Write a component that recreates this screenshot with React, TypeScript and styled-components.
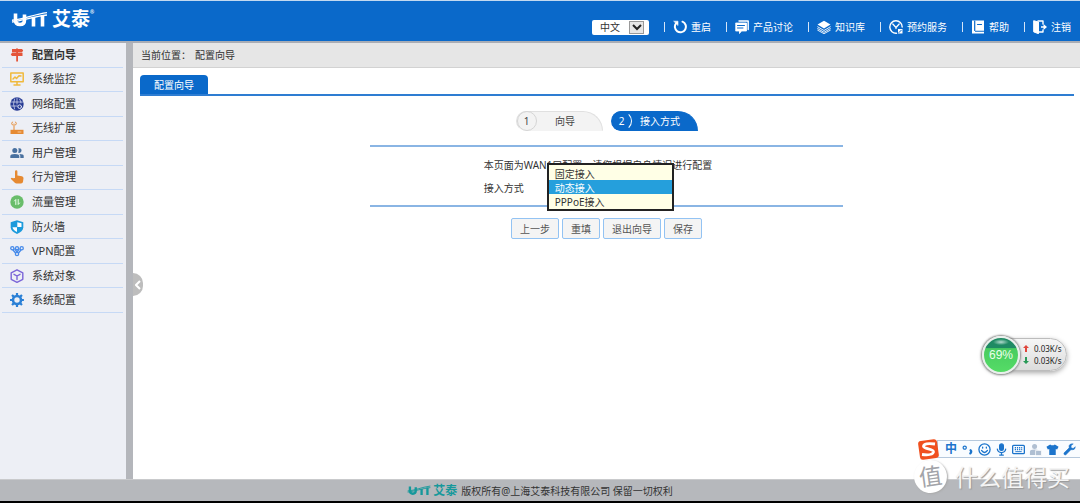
import React from "react";
import styled, { createGlobalStyle } from "styled-components";

const blue = "#0a69ca";

const GlobalStyle = createGlobalStyle`
  * { box-sizing: border-box; }
  body {
    margin: 0;
    background: #fff;
    color: #333;
    font: 10px/14px "Noto Sans", "Noto Sans CJK SC", sans-serif;
  }
  button, select { font: inherit; color: inherit; }
  ul, p { margin: 0; padding: 0; list-style: none; }
  a { color: inherit; text-decoration: none; }
  svg { display: block; flex: none; }
`;

const Page = styled.div`
  position: relative;
  display: flex;
  flex-direction: column;
  min-height: 100vh;
`;

const Header = styled.header`
  display: flex;
  justify-content: space-between;
  height: 43px;
  padding: 0 9px 0 11px;
  background: ${blue};
  border-top: 1px solid #c3d9f0;
  border-bottom: 2px solid #a9adb5;
  color: #fff;
`;

const Brand = styled.a`
  display: flex;
  align-items: center;
  gap: 4px;
  height: 36px;
  font-size: 19px;
  line-height: 20px;
  font-weight: 700;
`;

const Reg = styled.small`
  align-self: flex-start;
  margin-left: -4px;
  padding-top: 8px;
  font-size: 5px;
  line-height: 6px;
`;

const Nav = styled.nav`
  display: flex;
  align-items: center;
  gap: 15px;
  padding-top: 12px;
`;

const LangBox = styled.div`
  position: relative;
  color: #333;
`;

const LangSelect = styled.select`
  display: block;
  width: 57px;
  height: 15px;
  padding: 0 8px;
  border: 0;
  border-radius: 2px;
  background: #fff;
  appearance: none;
`;

const LangArrow = styled.span`
  position: absolute;
  top: 1px;
  right: 5px;
  display: grid;
  place-items: center;
  width: 15px;
  height: 13px;
  border: 1px solid #999;
  background: #e6e6e6;
  pointer-events: none;
`;

const NavLink = styled.a`
  display: flex;
  align-items: center;
  gap: 4px;
  &::before {
    content: "";
    width: 1px;
    height: 10px;
    margin-right: 4px;
    background: #d5e5f7;
  }
`;

const Body = styled.div`
  display: flex;
  flex: 1;
`;

const Sidebar = styled.nav`
  flex: none;
  width: 133px;
  background: #edeff5;
  border-right: 7px solid #b4b6bb;
`;

const Menu = styled.ul`
  display: grid;
  grid-template-rows: repeat(11, 1fr);
  height: 270px;
  padding: 0 3px 0 2px;
`;

const MenuItem = styled.li`
  display: flex;
  border-bottom: 1px solid #c6d9f5;
`;

const MenuLink = styled.a<{ $active?: boolean }>`
  display: flex;
  flex: 1;
  align-items: center;
  gap: 8px;
  padding-left: 8px;
  font-size: 11px;
  font-weight: ${(p) => (p.$active ? 700 : 400)};
`;

const Main = styled.main`
  position: relative;
  flex: 1;
  min-width: 0;
`;

const Collapse = styled.button`
  position: absolute;
  top: 230px;
  left: 0;
  display: grid;
  place-items: center;
  width: 10px;
  height: 23px;
  padding: 0;
  border: 0;
  border-radius: 0 12px 12px 0;
  background: #bdbdbd;
`;

const Crumbs = styled.div`
  display: flex;
  align-items: center;
  gap: 4px;
  height: 25px;
  padding-left: 8px;
  background: #e6e6e6;
  border-bottom: 1px solid #d2d2d2;
`;

const Tabs = styled.div`
  display: flex;
  margin: 7px 6px 0 7px;
  border-bottom: 2px solid #2e7dd2;
`;

const Tab = styled.button`
  height: 19px;
  padding: 0 14px;
  border: 0;
  border-radius: 4px 4px 0 0;
  background: ${blue};
  color: #fff;
`;

const Steps = styled.div`
  display: flex;
  justify-content: center;
  gap: 8px;
  padding-top: 15px;
`;

const Step = styled.div<{ $active?: boolean }>`
  display: flex;
  align-items: center;
  width: 87px;
  height: 20px;
  border: 1px solid ${(p) => (p.$active ? blue : "#e0e0e0")};
  border-bottom-color: ${(p) => (p.$active ? blue : "#f3f3f3")};
  border-radius: 10px 20px 0 10px;
  background: ${(p) => (p.$active ? blue : "#f3f3f3")};
  color: ${(p) => (p.$active ? "#fff" : "#444")};
`;

const StepNumber = styled.span<{ $active?: boolean }>`
  flex: none;
  width: 20px;
  height: 20px;
  border: 1px solid ${(p) => (p.$active ? blue : "#d5d5d5")};
  border-right-color: ${(p) => (p.$active ? "#fff" : "#d5d5d5")};
  border-radius: 10px;
  line-height: 18px;
  text-align: center;
`;

const StepLabel = styled.span`
  flex: 1;
  padding-right: 8px;
  text-align: center;
`;

const Panel = styled.section`
  position: relative;
  display: flex;
  flex-direction: column;
  align-items: flex-start;
  gap: 9px;
  width: 50%;
  height: 62px;
  margin: 14px auto 0;
  padding: 11px 0 0 114px;
  border: solid #8ab5e4;
  border-width: 2px 0;
  white-space: nowrap;
`;

const AccessList = styled.select`
  position: absolute;
  top: 16px;
  left: 177px;
  width: 127px;
  height: 48px;
  padding: 1px 0;
  border: 2px solid #222;
  border-radius: 0;
  background: #ffffe6;
  overflow: hidden;
  outline: 0;
`;

const AccessOption = styled.option`
  min-height: 14px;
  height: 14px;
  padding: 0 6px;
  line-height: 14px;
  &:checked {
    background: linear-gradient(#259fdc, #259fdc);
    -webkit-text-fill-color: #fff;
  }
`;

const Actions = styled.div`
  display: flex;
  justify-content: center;
  gap: 3px;
  padding-top: 11px;
`;

const ActionButton = styled.button`
  height: 21px;
  padding: 0 8px;
  border: 1px solid #93c3f3;
  border-radius: 2px;
  background: #f4f4f4;
  color: #555;
`;

const Footer = styled.footer`
  display: flex;
  align-items: center;
  justify-content: center;
  gap: 4px;
  height: 24px;
  background: #b6b8bc;
  border-top: 1px solid #c9cacc;
  border-bottom: 2px solid #000;
`;

const FooterBrand = styled.span`
  display: flex;
  align-items: center;
  gap: 2px;
  color: #16989b;
  font-size: 12px;
  font-weight: 700;
`;

const Traffic = styled.aside`
  position: absolute;
  top: 338px;
  right: 13px;
  display: flex;
  align-items: center;
  width: 84px;
  height: 33px;
  border: 1px solid #bcbcbc;
  border-radius: 17px;
  background: linear-gradient(#f6f6f6, #dcdcdc);
  box-shadow: 0 2px 5px #aaa;
`;

const Ball = styled.div`
  flex: none;
  display: grid;
  place-items: center;
  width: 38px;
  height: 38px;
  margin: 0 3px 0 -2px;
  border: 2px solid #e9f0ec;
  border-radius: 50%;
  background: radial-gradient(ellipse 8px 3px at 50% 12%, #b6dccf, transparent),
    linear-gradient(#1f8a63 0 30%, #48cc60 31%, #55dc66);
  box-shadow: 0 0 2px 1px #888;
  color: #e9ffe9;
  font: 12px/14px "Liberation Sans", sans-serif;
`;

const Rates = styled.ul`
  color: #222;
  font: 8px/12px "Noto Sans", sans-serif;
`;

const Rate = styled.li`
  display: flex;
  align-items: center;
  gap: 5px;
`;

const InputBar = styled.div`
  position: absolute;
  top: 440px;
  right: 0;
  display: flex;
  align-items: center;
  gap: 4px;
  height: 18px;
  padding: 0 4px 0 6px;
  border: 1px solid #b5c8dc;
  border-right: 0;
  background: #f9fcff;
  color: #1b74cc;
  font-size: 12px;
  font-weight: 700;
`;

const SogouMark = styled.span`
  margin: 0 1px 0 -27px;
`;

const Watermark = styled.div`
  position: absolute;
  top: 460px;
  right: 10px;
  display: flex;
  align-items: center;
  gap: 8px;
  color: #f4f4f4;
  font-size: 23px;
  line-height: 32px;
  text-shadow: 1px 1px 1px #999;
`;

const Seal = styled.span`
  width: 33px;
  height: 33px;
  border-radius: 50%;
  background: #fff;
  box-shadow: 1px 1px 2px #aaa;
  color: #a2a4a9;
  text-align: center;
  text-shadow: none;
  transform: rotate(-8deg);
`;

function Mark({ width }: { width: number }) {
  return (
    <svg width={width} viewBox="0 0 37 16" fill="none" stroke="currentColor">
      <path d="M4.500 2.500V9q0 4.500 4.500 4.500T13.500 9V3.500" strokeWidth="3.600" />
      <path d="M22.500 6v9.500M31.500 4v11.500" strokeWidth="3.600" />
      <path d="M1 9.200C12 8.500 22 3.500 36 1.600M1 11C12 9.500 23 5.500 36 4" strokeWidth="1.400" />
    </svg>
  );
}

const Icon = ({ children, size = 14 }: { children: React.ReactNode; size?: number }) => (
  <svg width={size} height={size} viewBox="0 0 14 14" fill="none" strokeLinecap="round" strokeLinejoin="round" aria-hidden="true">
    {children}
  </svg>
);

const navItems = [
  {
    label: "重启",
    icon: (
      <g stroke="#fff" strokeWidth="2">
        <path d="M9.500 1.700a5.500 5.500 0 1 1-6.300 1.500" />
        <path d="M1 1.200h4v4z" fill="#fff" strokeWidth=".6" />
      </g>
    ),
  },
  {
    label: "产品讨论",
    icon: (
      <>
        <path d="M4 1h9.200v8.500" stroke="#fff" strokeWidth="1.400" />
        <path d="M1 3h10.500v8H6.500L4.500 13.500V11H1z" fill="#fff" stroke="#fff" strokeWidth=".8" />
        <path d="M2.500 5.500h7M2.500 8h5.500" stroke={blue} />
      </>
    ),
  },
  {
    label: "知识库",
    icon: (
      <>
        <path d="m7 .8 6.500 3.800L7 8.500.5 4.600z" fill="#fff" />
        <path d="m.7 6.800 6.300 3.700 6.300-3.700M.7 8.600 7 12.300l6.300-3.700M.7 10.200 7 13.700l6.300-3.500" stroke="#fff" strokeWidth=".9" />
      </>
    ),
  },
  {
    label: "预约服务",
    icon: (
      <>
        <path d="M7.500 13.200a6.200 6.200 0 1 1 5.700-6.200" stroke="#fff" strokeWidth="1.400" />
        <path d="m3.800 4 3.200 3.500L10.200 4M7 7.500v1" stroke="#fff" strokeWidth="1.300" />
        <path d="M9 9h4.500v4.500H9z" fill="#fff" />
        <path d="m10 12.500 2.300-2.300" stroke={blue} />
      </>
    ),
  },
  {
    label: "帮助",
    icon: (
      <>
        <path d="M1 .5h12v10.300H4v1H13v1.700H1z" fill="#fff" />
        <path d="M3.700 1v9.500M6.500 4.500h4" stroke={blue} strokeWidth="1.200" />
      </>
    ),
  },
  {
    label: "注销",
    icon: (
      <>
        <path d="M1 .8 5.500 2v11.700L1 12z" fill="#fff" stroke="#fff" />
        <path d="M5 1h5v3M5 12h5v-2" stroke="#fff" strokeWidth="1.400" />
        <path d="M8 6.200h2.500V4L14 7l-3.500 3V7.800H8z" fill="#fff" />
      </>
    ),
  },
];

const menuItems = [
  {
    label: "配置向导",
    icon: (
      <path d="M6 .5h2V1h4l1.200 1.500L12 4.300H8v.5h4.500v3.200H8v5.500H6.200V8H2L.8 6.400 2 4.800h4.200v-.5H2V1h4z" fill="#e4553a" />
    ),
  },
  {
    label: "系统监控",
    icon: (
      <g stroke="#f0b93c" strokeWidth="1.500">
        <path d="M.8 1h12.400v8.800H.8zM7 10v2.500M4 13h6" />
        <path d="m3 7 2-2 1.500 1.500L9 3.700l2 .3" />
      </g>
    ),
  },
  {
    label: "网络配置",
    icon: (
      <>
        <circle cx="7" cy="7" r="6.700" fill="#273b94" />
        <path d="M1.500 5h11M1.500 9h6M7 1v6M4.500 2Q2.500 7 4.500 12M9.500 2Q11 4 11 6" stroke="#dfe4f5" strokeWidth=".7" />
        <circle cx="9.700" cy="9.700" r="1.800" stroke="#dfe4f5" />
      </>
    ),
  },
  {
    label: "无线扩展",
    icon: (
      <>
        <path d="M.5 8.800h13v4.200H.5z" fill="#e68a32" />
        <path d="M4 9V3M2.300 4Q.8 2.500 2.300 1M5.700 4Q7.200 2.500 5.700 1" stroke="#e68a32" />
        <path d="M8 11h3" stroke="#f9d5ae" strokeWidth=".8" />
      </>
    ),
  },
  {
    label: "用户管理",
    icon: (
      <g fill="#48709f">
        <circle cx="4.800" cy="4.500" r="2.500" />
        <path d="M.3 12V10q0-2 4.500-2t4.500 2v2z" />
        <path d="M8.300 2.300a2.400 2.400 0 1 1 0 4.500Q9.300 4.500 8.300 2.300M10.300 12V10q0-1.200-1.200-1.900 4.600-.1 4.600 1.900v2z" />
      </g>
    ),
  },
  {
    label: "行为管理",
    icon: (
      <path d="M5 8V1.500a1.200 1.200 0 0 1 2.400 0v4l4.500.8q1.700.3 1.600 2l-.5 3.400q-.2 1.800-2 1.800H6.500q-1 0-1.700-.8L.7 8.800q.8-1.500 2.300-.6z" fill="#e68a32" />
    ),
  },
  {
    label: "流量管理",
    icon: (
      <>
        <circle cx="7" cy="7" r="6.700" fill="#69bd6a" />
        <path d="M5.800 9.500V4.500L4.500 6M8.200 4.500v5L9.500 8" stroke="#eaffea" />
      </>
    ),
  },
  {
    label: "防火墙",
    icon: (
      <>
        <path d="m7 .3 6.300 1.900v5q0 4-6.300 6.700-6.300-2.700-6.300-6.700v-5z" fill="#1d9bdc" />
        <path d="M7.300 2.200 11.500 3.300V7H7.300zM2.500 7.300h4.500v4.600q-4.200-1.800-4.500-4.600z" fill="#fff" />
      </>
    ),
  },
  {
    label: "VPN配置",
    icon: (
      <g stroke="#478bea" strokeWidth="1.300">
        <circle cx="2.300" cy="4.200" r="1.600" />
        <circle cx="7" cy="4.200" r="1.500" />
        <circle cx="11.700" cy="4.200" r="1.600" />
        <circle cx="7" cy="10" r="1.600" />
        <path d="m3 6 2.500 3M11 6 8.500 9M4.800 5 7 8l2.200-3" />
      </g>
    ),
  },
  {
    label: "系统对象",
    icon: (
      <g stroke="#7b65d8" strokeWidth="1.400">
        <path d="m7 .8 5.800 3v6.500L7 13.300l-5.800-3V3.800z" />
        <path d="M4 5.300 7 7l3-1.700M7 7v3.500" />
      </g>
    ),
  },
  {
    label: "系统配置",
    icon: (
      <g stroke="#2b80d6">
        <circle cx="7" cy="7" r="4" strokeWidth="2.600" />
        <path d="M7 1.100v.8M7 12v.8M1.100 7h.8M12 7h.8M2.800 2.800l.6.600M10.600 10.600l.6.600M2.800 11.200l.6-.6M10.600 3.400l.6-.6" strokeWidth="2.200" strokeLinecap="square" />
      </g>
    ),
  },
];

const toolIcons = [
  <g>
    <circle cx="4" cy="5" r="1.700" stroke="#1b74cc" strokeWidth="1.300" />
    <path d="M10.300 7.800q1.500 1.500-.3 3.400" stroke="#1b74cc" strokeWidth="2.400" />
  </g>,
  <g stroke="#1b74cc" strokeWidth="1.400">
    <circle cx="7" cy="7" r="6" />
    <path d="M3.800 8q3.200 4.500 6.400 0M5 4.500v1M9 4.500v1" />
  </g>,
  <g stroke="#1b74cc" strokeWidth="1.400">
    <rect x="5" y="1" width="4" height="7" rx="2" fill="#1b74cc" />
    <path d="M2.500 6.500Q3 10.300 7 10.300t4.500-3.800M7 10.500V13M5 13h4" />
  </g>,
  <g>
    <rect x=".7" y="2.500" width="12.600" height="9" rx="1" stroke="#1b74cc" strokeWidth="1.400" />
    <path d="M3 5h8M3 7h8" stroke="#1b74cc" strokeWidth="1.400" strokeDasharray="1.300 1" strokeLinecap="butt" />
    <path d="M4 9.300h6" stroke="#1b74cc" />
  </g>,
  <g fill="#afbfd2">
    <circle cx="6" cy="3.700" r="2.700" />
    <path d="M1 13V9.500q0-2.500 5-2.500t5 2.500V13z" />
    <path d="M7.500 8h6v5.500h-6z" stroke="#fff" strokeWidth=".8" />
  </g>,
  <path d="M4.500 1.500q2.500 2 5 0L13.500 4 12 7l-1.500-.6V13h-7V6.400L2 7 .5 4z" fill="#1b74cc" />,
  <path d="M13 4.500 10.800 6 8.500 4.800 9 2.200 11 1Q7.500.3 6.500 3l.2 2.200L1 10.800q-.5 2 1.800 2.200l5.700-5.800q4.800.5 4.500-2.700z" fill="#1b74cc" stroke="#1b74cc" strokeWidth=".6" />,
];

export default function App() {
  return (
    <Page>
      <GlobalStyle />
      <Header>
        <Brand href="#" aria-label="UTT 艾泰">
          <Mark width={37} />
          <span>艾泰</span>
          <Reg>®</Reg>
        </Brand>
        <Nav>
          <LangBox>
            <LangSelect aria-label="语言" defaultValue="zh">
              <option value="zh">中文</option>
            </LangSelect>
            <LangArrow>
              <svg width="10" height="7" viewBox="0 0 10 7" fill="none" stroke="#222" strokeWidth="2">
                <path d="m1 1 4 4 4-4" />
              </svg>
            </LangArrow>
          </LangBox>
          {navItems.map((item) => (
            <NavLink href="#" key={item.label}>
              <Icon>{item.icon}</Icon>
              {item.label}
            </NavLink>
          ))}
        </Nav>
      </Header>

      <Body>
        <Sidebar>
          <Menu>
            {menuItems.map((item, i) => (
              <MenuItem key={item.label}>
                <MenuLink href="#" $active={i === 0}>
                  <Icon>{item.icon}</Icon>
                  {item.label}
                </MenuLink>
              </MenuItem>
            ))}
          </Menu>
        </Sidebar>
        <Main>
          <Collapse aria-label="收起菜单">
            <svg width="6" height="10" viewBox="0 0 6 10" fill="none" stroke="#fff" strokeWidth="2">
              <path d="M5 1 1 5l4 4" />
            </svg>
          </Collapse>
          <Crumbs>
            <span>当前位置：</span>
            <span>配置向导</span>
          </Crumbs>
          <Tabs>
            <Tab>配置向导</Tab>
          </Tabs>
          <Steps>
            <Step>
              <StepNumber>1</StepNumber>
              <StepLabel>向导</StepLabel>
            </Step>
            <Step $active>
              <StepNumber $active>2</StepNumber>
              <StepLabel>接入方式</StepLabel>
            </Step>
          </Steps>
          <Panel>
            <p>本页面为WAN1口配置，请您根据自身情况进行配置</p>
            <label htmlFor="access">接入方式</label>
            <AccessList id="access" size={3} defaultValue="dhcp">
              <AccessOption value="static">固定接入</AccessOption>
              <AccessOption value="dhcp">动态接入</AccessOption>
              <AccessOption value="pppoe">PPPoE接入</AccessOption>
            </AccessList>
          </Panel>
          <Actions>
            {["上一步", "重填", "退出向导", "保存"].map((label) => (
              <ActionButton key={label}>{label}</ActionButton>
            ))}
          </Actions>
        </Main>
      </Body>

      <Footer>
        <FooterBrand>
          <Mark width={24} />
          艾泰
        </FooterBrand>
        <span>版权所有@上海艾泰科技有限公司 保留一切权利</span>
      </Footer>

      <Traffic>
        <Ball>69%</Ball>
        <Rates>
          <Rate>
            <svg width="6" height="7" viewBox="0 0 6 7" fill="#e0463c">
              <path d="m3 0 3 3H4v4H2V3H0z" />
            </svg>
            0.03K/s
          </Rate>
          <Rate>
            <svg width="6" height="7" viewBox="0 0 6 7" fill="#2a9a58">
              <path d="m3 7 3-3H4V0H2v4H0z" />
            </svg>
            0.03K/s
          </Rate>
        </Rates>
      </Traffic>

      <Watermark>
        <Seal>值</Seal>
        什么值得买
      </Watermark>

      <InputBar>
        <SogouMark>
          <svg width="23" height="23" viewBox="0 0 23 23" fill="none">
            <rect x="2" y="2" width="19" height="19" rx="3" fill="#f0501f" transform="rotate(-8 11.500 11.500)" />
            <path d="M18 6Q7 4.500 6.500 8.300c0 3 10.500 2.200 10 5.700Q15.500 17.800 5 16.500" stroke="#fff" strokeWidth="2.800" />
          </svg>
        </SogouMark>
        中
        {toolIcons.map((icon, i) => (
          <Icon key={i} size={13}>
            {icon}
          </Icon>
        ))}
      </InputBar>
    </Page>
  );
}
